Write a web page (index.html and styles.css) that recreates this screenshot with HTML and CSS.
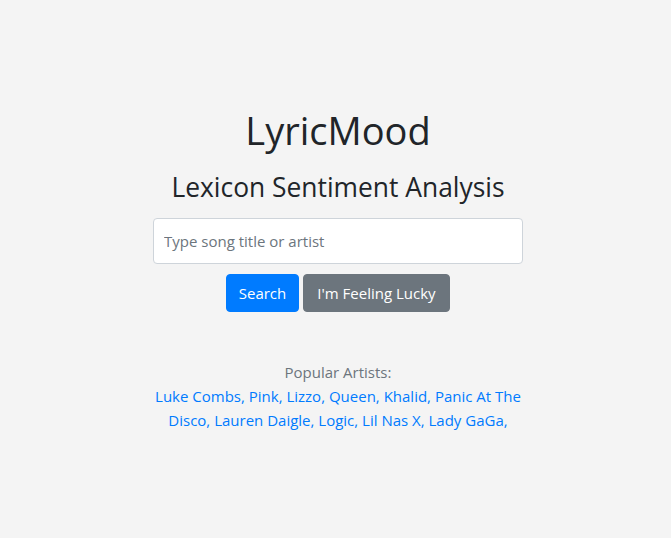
FILE: index.html
```html
<!DOCTYPE html>
<html lang="en">
<head>
<meta charset="utf-8">
<title>LyricMood</title>
<link rel="stylesheet" href="styles.css">
</head>
<body>
<main class="page">
  <h1 class="title">LyricMood</h1>
  <h2 class="subtitle">Lexicon Sentiment Analysis</h2>
  <form class="search">
    <input class="search-input" type="text" placeholder="Type song title or artist">
    <div class="buttons">
      <button type="button" class="btn btn-primary">Search</button>
      <button type="button" class="btn btn-secondary">I'm Feeling Lucky</button>
    </div>
  </form>
  <section class="popular">
    <div class="popular-label">Popular Artists:</div>
    <div class="popular-list">
      <a href="#">Luke Combs,</a> <a href="#">Pink,</a> <a href="#">Lizzo,</a> <a href="#">Queen,</a> <a href="#">Khalid,</a> <a href="#">Panic At The Disco,</a> <a href="#">Lauren Daigle,</a> <a href="#">Logic,</a> <a href="#">Lil Nas X,</a> <a href="#">Lady GaGa,</a>
    </div>
  </section>
</main>
</body>
</html>
```

FILE: styles.css
```css
html, body {
  margin: 0;
  padding: 0;
  background: #f4f4f4;
}
body {
  font-family: "Open Sans", "Noto Sans", sans-serif;
  font-size: 15px;
  line-height: 24px;
  color: #212529;
}
.page {
  width: 370px;
  margin-left: calc(50% - 182.5px);
  padding-top: 107px;
  display: flex;
  flex-direction: column;
  align-items: stretch;
  text-align: center;
}
.title {
  margin: 0;
  font-size: 38px;
  font-weight: 400;
  line-height: 46px;
}
.subtitle {
  margin: 18px 0 0;
  font-size: 26.4px;
  font-weight: 400;
  line-height: 32px;
}
.search {
  margin-top: 15px;
  display: flex;
  flex-direction: column;
  gap: 10px;
}
.search-input {
  box-sizing: border-box;
  width: 100%;
  height: 46px;
  padding: 0 10px;
  font-family: inherit;
  font-size: 15px;
  color: #495057;
  background: #fff;
  border: 1px solid #ced4da;
  border-radius: 4px;
  outline: none;
}
.search-input::placeholder {
  color: #6c757d;
}
.buttons {
  display: flex;
  justify-content: center;
  gap: 4px;
}
.btn {
  height: 38px;
  padding: 0 12px;
  font-family: inherit;
  font-size: 15px;
  color: #fff;
  border: 1px solid transparent;
  border-radius: 4px;
}
.btn-primary {
  width: 73px;
  padding: 0;
  background: #007bff;
  border-color: #007bff;
}
.btn-secondary {
  width: 147px;
  padding: 0;
  background: #6c757d;
  border-color: #6c757d;
}
.popular {
  margin-top: 48px;
}
.popular-label {
  color: #6c757d;
}
.popular-list a {
  color: #007bff;
  text-decoration: none;
}
```
